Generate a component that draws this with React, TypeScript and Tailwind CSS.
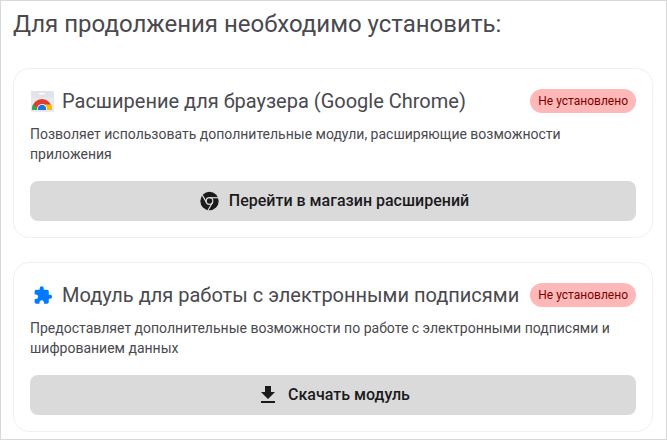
import type { ReactNode } from "react";

function WebStoreIcon() {
  return (
    <svg viewBox="0 0 24 24" className="size-6" aria-hidden="true">
      <clipPath id="store-arc">
        <path d="M1 9h23v12H1z" />
      </clipPath>
      <path d="M1 2h23v19.500a1.500 1.500 0 0 1-1.500 1.500h-20A1.500 1.500 0 0 1 1 21.500z" fill="#e8eaed" />
      <path d="M1 2h23v7H1z" fill="#e2e4e7" />
      <rect x="9" y="4" width="6" height="1.400" rx=".7" fill="#fff" />
      <g clipPath="url(#store-arc)">
        <circle cx="12" cy="20" r="10" fill="#e33b2e" />
        <path d="M3.340 15A10 10 0 0 0 2 22h7z" fill="#34a853" />
        <path d="M12 15.400h8.900A10 10 0 0 1 22 22H12z" fill="#fbbc04" />
        <circle cx="12" cy="20" r="5" fill="#fff" />
        <circle cx="12" cy="20" r="4.200" fill="#1a73e8" />
      </g>
    </svg>
  );
}

function PuzzleIcon() {
  return (
    <svg viewBox="0 0 24 24" className="size-6" fill="#007bff" aria-hidden="true">
      <g transform="translate(3 2.500) scale(.83)">
        <path d="M20.500 11H19V7c0-1.100-.9-2-2-2h-4V3.500a2.500 2.500 0 0 0-5 0V5H4c-1.100 0-1.990.9-1.990 2v3.800H3.500c1.490 0 2.700 1.210 2.700 2.700s-1.210 2.700-2.700 2.700H2V20c0 1.100.9 2 2 2h3.800v-1.500c0-1.490 1.210-2.700 2.700-2.700s2.700 1.210 2.700 2.700V22H17c1.100 0 2-.9 2-2v-4h1.500a2.500 2.500 0 0 0 0-5z" />
      </g>
    </svg>
  );
}

function ChromeIcon() {
  return (
    <svg viewBox="0 0 24 24" className="size-6" aria-hidden="true">
      <circle cx="12.500" cy="12" r="9.200" fill="#1b1b1d" />
      <g fill="none" stroke="#dadada" strokeWidth="1.200">
        <circle cx="12.500" cy="12" r="3.300" />
        <path d="M12.500 8.700h9" />
        <path d="M15.360 13.650l-4.500 7.800" />
        <path d="M9.640 13.650L5.140 5.850" />
      </g>
    </svg>
  );
}

function DownloadIcon() {
  return (
    <svg viewBox="0 0 24 24" className="size-6" fill="#1b1b1d" aria-hidden="true">
      <path d="M19 9h-4V3H9v6H5l7 7zM5 18v2h14v-2z" />
    </svg>
  );
}

type ModuleCardProps = {
  icon: ReactNode;
  title: string;
  description: string;
  actionIcon: ReactNode;
  action: string;
};

function ModuleCard({ icon, title, description, actionIcon, action }: ModuleCardProps) {
  return (
    <section className="rounded-2xl border border-[#f0f0f0] p-4">
      <div className="flex h-8 items-center justify-between gap-2">
        <div className="flex items-center gap-2">
          {icon}
          <h2 className="text-xl whitespace-nowrap">{title}</h2>
        </div>
        <span className="shrink-0 rounded-full bg-[#ffb8b8] px-2 text-xs leading-6 text-[#7a0000]">
          Не установлено
        </span>
      </div>
      <p className="mt-[7px] text-sm">{description}</p>
      <button
        type="button"
        className="mt-[17px] flex h-10 w-full items-center justify-center gap-2 rounded-lg bg-[#dadada] font-medium text-[#1b1b1d]"
      >
        {actionIcon}
        {action}
      </button>
    </section>
  );
}

export default function App() {
  return (
    <main className="border border-[#d8d8d8] bg-white py-[7px] pr-[13px] pl-3 font-['Roboto',sans-serif] text-[#49494e]">
      <h1 className="text-2xl">Для продолжения необходимо установить:</h1>
      <div className="mt-7 flex flex-col gap-6">
        <ModuleCard
          icon={<WebStoreIcon />}
          title="Расширение для браузера (Google Chrome)"
          description="Позволяет использовать дополнительные модули, расширяющие возможности приложения"
          actionIcon={<ChromeIcon />}
          action="Перейти в магазин расширений"
        />
        <ModuleCard
          icon={<PuzzleIcon />}
          title="Модуль для работы с электронными подписями"
          description="Предоставляет дополнительные возможности по работе с электронными подписями и шифрованием данных"
          actionIcon={<DownloadIcon />}
          action="Скачать модуль"
        />
      </div>
    </main>
  );
}
